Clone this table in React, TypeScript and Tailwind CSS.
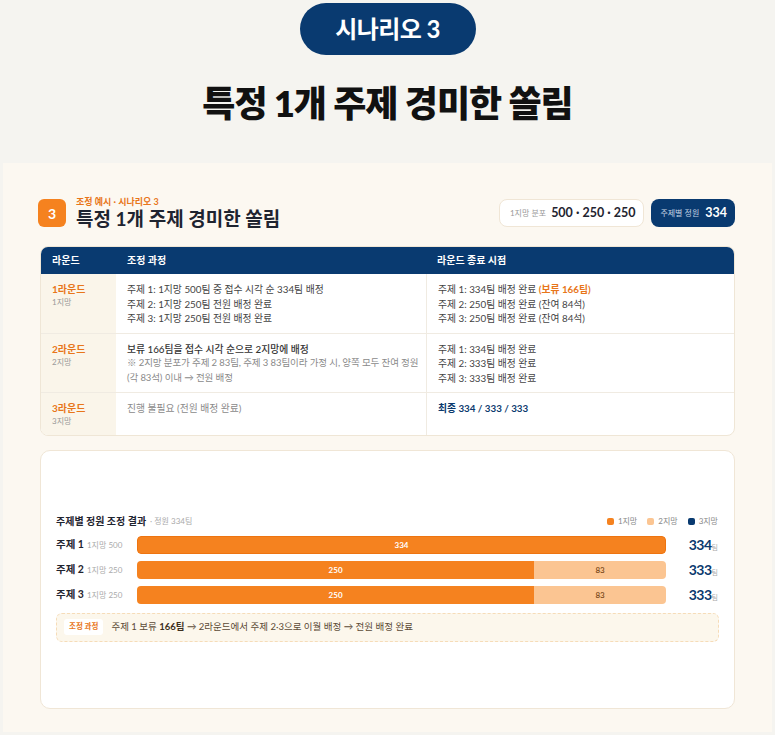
import React from 'react';

const font = { fontFamily: 'Lato, "Noto Sans CJK KR", sans-serif' };

const rounds = [
  {
    name: '1라운드',
    sub: '1지망',
    process: [
      <span key="a">주제 1: 1지망 500팀 중 접수 시각 순 334팀 배정</span>,
      <span key="b">주제 2: 1지망 250팀 전원 배정 완료</span>,
      <span key="c">주제 3: 1지망 250팀 전원 배정 완료</span>,
    ],
    end: [
      <span key="a">
        주제 1: 334팀 배정 완료 <b className="font-bold text-[#e8761a]">(보류 166팀)</b>
      </span>,
      <span key="b">주제 2: 250팀 배정 완료 (잔여 84석)</span>,
      <span key="c">주제 3: 250팀 배정 완료 (잔여 84석)</span>,
    ],
  },
  {
    name: '2라운드',
    sub: '2지망',
    process: [
      <span key="a" className="font-medium text-[#333]">보류 166팀을 접수 시각 순으로 2지망에 배정</span>,
      <span key="b" className="whitespace-nowrap text-[9.5px] tracking-[-0.1px] text-[#8a8a8a]">
        ※ 2지망 분포가 주제 2 83팀, 주제 3 83팀이라 가정 시, 양쪽 모두 잔여 정원
        <br />
        (각 83석) 이내 → 전원 배정
      </span>,
    ],
    end: [
      <span key="a">주제 1: 334팀 배정 완료</span>,
      <span key="b">주제 2: 333팀 배정 완료</span>,
      <span key="c">주제 3: 333팀 배정 완료</span>,
    ],
  },
  {
    name: '3라운드',
    sub: '3지망',
    process: [<span key="a" className="text-[#8a8a8a]">진행 불필요 (전원 배정 완료)</span>],
    end: [<span key="a" className="font-bold text-[#0b3a6e]">최종 334 / 333 / 333</span>],
  },
];

const bars = [
  { name: '주제 1', sub: '1지망 500', first: 334, second: 0, total: 334, border: true },
  { name: '주제 2', sub: '1지망 250', first: 250, second: 83, total: 333, border: false },
  { name: '주제 3', sub: '1지망 250', first: 250, second: 83, total: 333, border: false },
];

export default function App() {
  return (
    <div className="min-h-[735px] w-[775px] bg-[#f5f4f0] pt-[3px]" style={font}>
      {/* Scenario pill */}
      <div className="flex justify-center">
        <div className="flex h-[52px] w-[176px] items-center justify-center rounded-full bg-[#093a70] text-[24px] font-bold tracking-tight text-white">
          시나리오 3
        </div>
      </div>
      <h1 className="mt-[24px] text-center text-[36px] font-extrabold leading-[48px] tracking-[-1px] text-[#111]">
        특정 1개 주제 경미한 쏠림
      </h1>

      {/* Panel */}
      <div className="mx-[3px] mt-[36px] h-[569px] bg-[#fcf8f1] px-[37px] pt-[33px]">
        {/* Header */}
        <div className="flex items-center justify-between">
          <div className="-ml-[2px] flex items-center gap-[10px]">
            <div className="flex h-[28px] w-[28px] items-center justify-center rounded-[6px] bg-[#f5821f] text-[14px] font-bold text-white">
              3
            </div>
            <div className="flex flex-col">
              <span className="text-[9px] font-bold leading-[11px] text-[#e8761a]">조정 예시 · 시나리오 3</span>
              <span className="text-[19px] font-bold leading-[23px] text-[#1f2430]">특정 1개 주제 경미한 쏠림</span>
            </div>
          </div>
          <div className="flex items-center gap-[7px]">
            <div className="flex h-[28px] items-center gap-[5px] rounded-[8px] border border-[#f0e6d6] bg-white pl-[10px] pr-[8px]">
              <span className="text-[8px] text-[#999]">1지망 분포</span>
              <span className="text-[12.5px] font-bold text-[#1f2430]">500 · 250 · 250</span>
            </div>
            <div className="flex h-[28px] items-center gap-[6px] rounded-[8px] bg-[#093a70] pl-[9px] pr-[8px]">
              <span className="text-[8px] text-[#c5d2e3]">주제별 정원</span>
              <span className="text-[12.5px] font-bold text-white">334</span>
            </div>
          </div>
        </div>

        {/* Table */}
        <div className="mt-[16px] overflow-hidden rounded-[8px] border border-[#efe6d6] bg-white">
          <div className="grid h-[27px] grid-cols-[75px_310px_1fr] items-center bg-[#093a70] text-[10px] font-bold text-white">
            <div className="pl-[11px]">라운드</div>
            <div className="pl-[11px]">조정 과정</div>
            <div className="pl-[11px]">라운드 종료 시점</div>
          </div>
          {rounds.map((r, i) => (
            <div
              key={r.name}
              className={`grid grid-cols-[75px_310px_1fr] text-[9.8px] leading-[14.5px] text-[#444] ${
                i > 0 ? 'border-t border-[#f0ebe2]' : ''
              }`}
            >
              <div className={`bg-[#faf5ea] pl-[11px] pt-[9px] ${i === 2 ? 'pb-[8px]' : ''}`}>
                <div className="text-[10px] font-bold leading-[13px] text-[#e8761a]">{r.name}</div>
                <div className="text-[8px] leading-[12px] text-[#999]">{r.sub}</div>
              </div>
              <div className={`flex flex-col overflow-hidden pl-[11px] pr-[2px] pt-[8px] ${i === 2 ? 'pb-[8px]' : 'pb-[7px]'}`}>
                {r.process}
              </div>
              <div className="flex flex-col border-l border-[#f0ebe2] pl-[11px] pr-[10px] pt-[8px] pb-[7px]">
                {r.end}
              </div>
            </div>
          ))}
        </div>

        {/* Chart card */}
        <div className="mt-[14px] flex h-[259px] flex-col justify-center rounded-[10px] border border-[#f0e6d6] bg-white px-[15px] pb-[4px]">
          <div className="flex items-center justify-between">
            <div className="flex items-center gap-[4px]">
              <span className="text-[10px] font-bold text-[#1f2430]">주제별 정원 조정 결과</span>
              <span className="text-[8px] text-[#aaa]">· 정원 334팀</span>
            </div>
            <div className="flex items-center gap-[10px] pr-[1px] text-[8px] text-[#888]">
              <span className="flex items-center gap-[4px]">
                <span className="h-[7px] w-[7px] rounded-[2px] bg-[#f5821f]" />1지망
              </span>
              <span className="flex items-center gap-[4px]">
                <span className="h-[7px] w-[7px] rounded-[2px] bg-[#fbc592]" />2지망
              </span>
              <span className="flex items-center gap-[4px]">
                <span className="h-[7px] w-[7px] rounded-[2px] bg-[#093a70]" />3지망
              </span>
            </div>
          </div>

          <div className="mt-[7px] flex flex-col gap-[7px]">
            {bars.map((b) => (
              <div key={b.name} className="flex h-[18px] items-center">
                <div className="flex w-[81px] items-baseline gap-[3px]">
                  <span className="text-[10.5px] font-bold text-[#1f2430]">{b.name}</span>
                  <span className="text-[8px] text-[#aaa]">{b.sub}</span>
                </div>
                <div className="flex h-[18px] w-[529px] overflow-hidden rounded-[4px]">
                  <div
                    className={`flex h-full items-center justify-center bg-[#f5821f] text-[8px] font-bold text-white ${
                      b.border ? 'rounded-[4px] border border-[#ee7410]' : ''
                    }`}
                    style={{ width: `${(b.first / b.total) * 100}%` }}
                  >
                    {b.first}
                  </div>
                  {b.second > 0 && (
                    <div className="flex h-full flex-1 items-center justify-center bg-[#fbc592] text-[8px] font-semibold text-[#7a4a1a]">
                      {b.second}
                    </div>
                  )}
                </div>
                <div className="flex flex-1 items-baseline justify-end pr-[1px]">
                  <span className="text-[14px] font-bold tracking-[-0.5px] text-[#0b3a6e]">{b.total}</span>
                  <span className="text-[7px] text-[#aaa]">팀</span>
                </div>
              </div>
            ))}
          </div>

          <div className="mt-[9px] flex h-[29px] items-center gap-[8px] rounded-[6px] border border-dashed border-[#f6dcb8] bg-[#fcf7ec] px-[7px]">
            <span className="rounded-[3px] bg-white px-[5px] py-[2px] text-[7.5px] font-bold text-[#e8761a]">조정 과정</span>
            <span className="text-[9.5px] text-[#5b4a36]">
              주제 1 보류 <b className="font-bold text-[#3e2f1e]">166팀</b> → 2라운드에서 주제 2·3으로 이월 배정 → 전원 배정 완료
            </span>
          </div>
        </div>
      </div>
    </div>
  );
}
